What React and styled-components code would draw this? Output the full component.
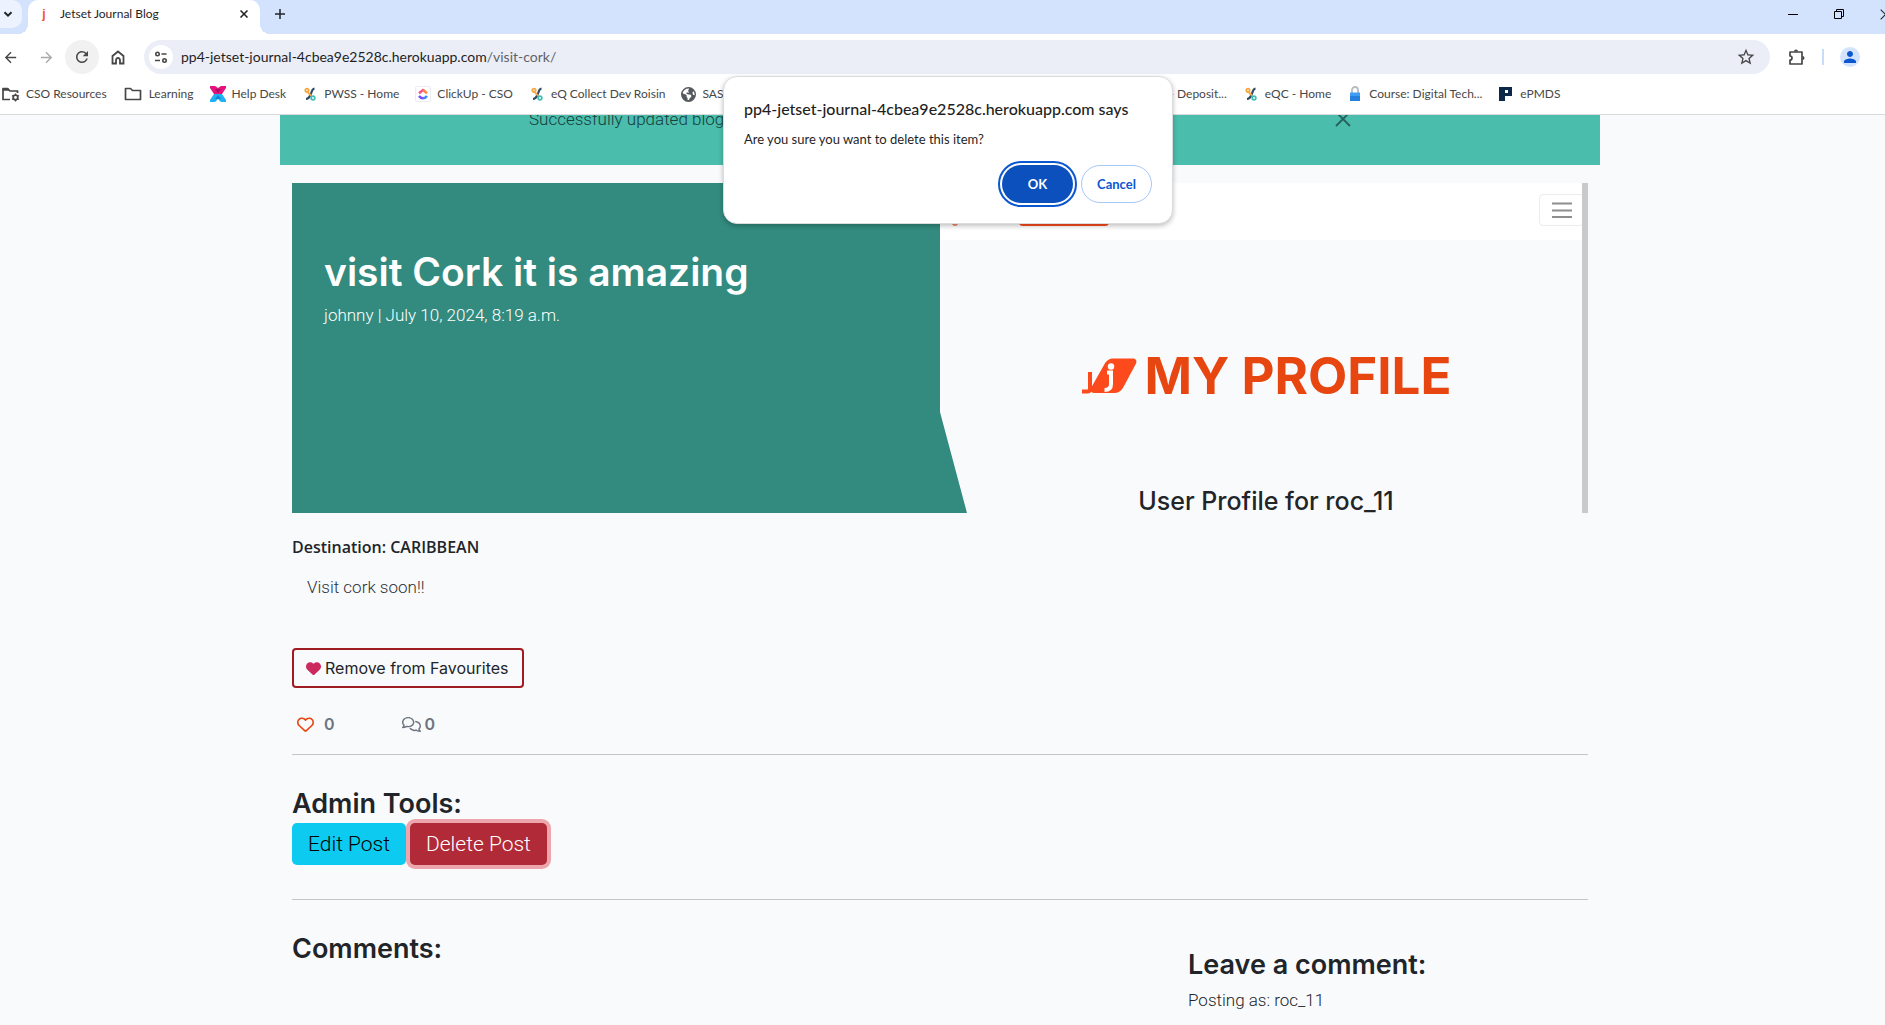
import React from 'react';
import styled, { createGlobalStyle } from 'styled-components';
import { MdArrowBack, MdArrowForward, MdRefresh, MdStarBorder, MdPerson, MdMoreVert } from 'react-icons/md';
import { FaHeart, FaRegHeart, FaRegComments, FaEarthAmericas } from 'react-icons/fa6';

const chromeFont = 'Lato, "Open Sans", sans-serif';
const headingFont = 'Inter, Roboto, sans-serif';
const bodyFont = 'Roboto, "Liberation Sans", sans-serif';

const GlobalStyle = createGlobalStyle`
  *, *::before, *::after { box-sizing: border-box; }
  html, body { margin: 0; height: 100%; overflow: hidden; }
  #root { height: 100%; }
  body { background: #f9fafc; color: #212529; font-family: ${bodyFont}; font-size: 17px; font-weight: 300; line-height: 24px; }
  h1, h2, h3, p { margin: 0; }
  button { font: inherit; color: inherit; padding: 0; border: 0; background: none; cursor: pointer; }
  svg { display: block; flex: none; }
`;

/* ---------- browser frame ---------- */

const Browser = styled.div`
  display: flex;
  flex-direction: column;
  height: 100%;
  overflow: hidden;
`;

const TabStrip = styled.div`
  display: flex;
  align-items: flex-start;
  height: 34px;
  background: #d3e3fd;
  font-family: ${chromeFont};
  overflow: hidden;
`;

const TabSearch = styled.button`
  display: flex;
  align-items: center;
  justify-content: center;
  width: 22px;
  height: 28px;
  padding-right: 6px;
  margin-right: 6px;
  border-radius: 0 10px 10px 0;
  background: #ecf2fe;
`;

const Tab = styled.div`
  position: relative;
  display: flex;
  align-items: center;
  width: 232px;
  height: 34px;
  padding: 0 12px 6px 10px;
  border-radius: 10px 10px 0 0;
  background: #fff;
  font-size: 12px;
  line-height: 16px;
  font-weight: 400;
  color: #1f1f1f;

  &::before, &::after {
    content: '';
    position: absolute;
    bottom: 0;
    width: 10px;
    height: 10px;
  }
  &::before { left: -10px; background: radial-gradient(circle at 0 0, transparent 10px, #fff 10px); }
  &::after { right: -10px; background: radial-gradient(circle at 100% 0, transparent 10px, #fff 10px); }
`;

const Favicon = styled.span`
  width: 12px;
  margin-right: 10px;
  text-align: center;
  font-family: "Liberation Sans", sans-serif;
  font-weight: 700;
  color: #f4511e;
`;

const TabTitle = styled.span`
  flex: 1;
  white-space: nowrap;
`;

const NewTab = styled.button`
  display: flex;
  align-items: center;
  justify-content: center;
  width: 28px;
  height: 28px;
  margin-left: 6px;
`;

const WindowButtons = styled.div`
  display: flex;
  height: 28px;
  margin-left: auto;
  margin-right: -23px;
`;

const WindowButton = styled.button`
  display: flex;
  align-items: center;
  justify-content: center;
  width: 46px;
`;

const Toolbar = styled.div`
  display: flex;
  align-items: center;
  gap: 2px;
  height: 46px;
  margin: 0 -19px 0 -7px;
  background: #fff;
  color: #474747;
`;

const ToolButton = styled.button`
  display: flex;
  align-items: center;
  justify-content: center;
  width: 34px;
  height: 34px;
  border-radius: 50%;
  background: ${(p) => (p.$active ? '#f1f1f1' : 'transparent')};
  color: ${(p) => (p.$muted ? '#a9a9a9' : '#474747')};
`;

const Omnibox = styled.div`
  display: flex;
  align-items: center;
  flex: 1;
  height: 34px;
  margin: 0 8px 0 7px;
  padding: 0 14px 0 5px;
  border-radius: 17px;
  background: #ebeef7;
`;

const SiteInfo = styled.button`
  display: flex;
  align-items: center;
  justify-content: center;
  width: 24px;
  height: 24px;
  margin-right: 8px;
  border-radius: 50%;
  background: #fff;
`;

const Url = styled.div`
  flex: 1;
  font-family: ${chromeFont};
  font-size: 14px;
  font-weight: 400;
  color: #5f6368;
  b { font-weight: 400; color: #1f1f1f; }
`;

const Divider = styled.span`
  width: 2px;
  height: 16px;
  margin: 0 14px 0 6px;
  background: #c8dcfb;
`;

const Avatar = styled.button`
  display: flex;
  align-items: center;
  justify-content: center;
  width: 20px;
  height: 20px;
  margin-right: 8px;
  border-radius: 50%;
  background: #d3e3fd;
  color: #0b57d0;
`;

const Bookmarks = styled.nav`
  display: flex;
  align-items: center;
  gap: 16px;
  height: 35px;
  padding-bottom: 6px;
  border-bottom: 1px solid #dadcdc;
  background: #fff;
  font-family: ${chromeFont};
  font-size: 12px;
  line-height: 16px;
  font-weight: 400;
`;

const Bookmark = styled.a`
  display: flex;
  align-items: center;
  gap: 6px;
  width: ${(p) => p.$width || 'auto'};
  color: #474747;
  text-decoration: none;
  white-space: nowrap;
`;

/* ---------- confirm dialog ---------- */

const Dialog = styled.div`
  position: absolute;
  z-index: 5;
  top: 76px;
  left: 723px;
  width: 450px;
  padding: 20px;
  border: 1px solid #d9dbdd;
  border-radius: 14px;
  background: #fff;
  box-shadow: 0 2px 5px rgba(0, 0, 0, 0.25);
  font-family: ${chromeFont};
  font-weight: 400;
  color: #1f1f1f;
`;

const DialogTitle = styled.h2`
  font-size: 16px;
  line-height: 24px;
  font-weight: 500;
`;

const DialogText = styled.p`
  margin-top: 8px;
  font-size: 13px;
  line-height: 20px;
`;

const DialogActions = styled.div`
  display: flex;
  justify-content: flex-end;
  gap: 8px;
  margin-top: 16px;
`;

const DialogButton = styled.button`
  width: 71px;
  height: 38px;
  border-radius: 19px;
  font-size: 13px;
  font-weight: 700;
  background: ${(p) => (p.$primary ? '#0b50bd' : '#fff')};
  color: ${(p) => (p.$primary ? '#fff' : '#0b57d0')};
  border: ${(p) => (p.$primary ? '0' : '1px solid #a8c7fa')};
  outline: ${(p) => (p.$primary ? '2px solid #0b57d0' : '0')};
  outline-offset: 2px;
`;

/* ---------- blog page ---------- */

const Page = styled.main`
  flex: 1;
  min-height: 0;
  overflow: hidden;
  padding-right: 5px;
`;

const Container = styled.div`
  max-width: 1320px;
  margin: 0 auto;
`;

const Alert = styled.div`
  display: flex;
  align-items: center;
  justify-content: center;
  height: 92px;
  margin-top: -42px;
  background: #4abdac;
`;

const AlertBody = styled.div`
  display: flex;
  align-items: center;
  justify-content: space-between;
  width: 822px;
  color: #17403b;
`;

const AlertClose = styled.button`
  color: #256158;
`;

const Content = styled.div`
  padding: 18px 12px 0;
`;

const Hero = styled.header`
  display: flex;
  height: 330px;
`;

const HeroText = styled.div`
  position: relative;
  z-index: 1;
  width: calc(50% + 27px);
  margin-right: -27px;
  padding: 65px 32px 0;
  background: #328b7e;
  color: #fff;
  clip-path: polygon(0 0, calc(100% - 27px) 0, calc(100% - 27px) 229px, 100% 100%, 0 100%);
`;

const HeroTitle = styled.h1`
  font-family: ${headingFont};
  font-size: 39px;
  line-height: 48px;
  font-weight: 600;
`;

const Byline = styled.p`
  margin-top: 7px;
`;

const HeroImage = styled.div`
  display: flex;
  flex-direction: column;
  width: 50%;
  border-right: 6px solid #c9c9c9;
  background: #f9fafc;
  overflow: hidden;
`;

const ShotNav = styled.div`
  display: flex;
  flex: none;
  align-items: flex-start;
  height: 57px;
  padding: 11px 0 0 12px;
  background: #fff;
`;

const ShotDot = styled.span`
  width: 6px;
  height: 32px;
  border-radius: 3px;
  background: #f08a6c;
`;

const ShotPill = styled.span`
  width: 90px;
  height: 32px;
  margin-left: 61px;
  border-radius: 4px;
  background: #fd4a1c;
`;

const ShotToggle = styled.button`
  display: flex;
  align-items: center;
  justify-content: center;
  width: 45px;
  height: 32px;
  margin: 0 -2px 0 auto;
  border: 1px solid #ececec;
  border-radius: 4px;
  color: #8e8e8e;
`;

const ShotBody = styled.div`
  padding: 106px 0 0 10px;
  font-family: ${headingFont};
`;

const ShotHeading = styled.div`
  display: flex;
  align-items: center;
  justify-content: center;
  gap: 8px;
  color: #e84610;
  font-size: 51px;
  line-height: 60px;
  font-weight: 700;
`;

const ShotSubheading = styled.div`
  margin-top: 80px;
  text-align: center;
  font-size: 25px;
  line-height: 30px;
  font-weight: 500;
`;

const Destination = styled.p`
  margin-top: 22px;
  font-family: "Open Sans", "Noto Sans", sans-serif;
  font-size: 16px;
  font-weight: 600;
`;

const PostBody = styled.p`
  margin-top: 16px;
  padding-left: 15px;
  color: #2c3138;
`;

const FavouriteButton = styled.button`
  display: flex;
  align-items: center;
  gap: 4px;
  height: 40px;
  margin-top: 49px;
  padding: 0 13px 0 12px;
  border: 2px solid #9f1c22;
  border-radius: 4px;
  font-family: ${headingFont};
  font-size: 16px;
  font-weight: 400;
  svg { color: #cb2a5e; }
`;

const Counts = styled.div`
  display: flex;
  margin-top: 24px;
  padding-left: 5px;
  font-family: ${headingFont};
  font-size: 16px;
  font-weight: 600;
  color: #6c757d;
`;

const Count = styled.button`
  display: flex;
  align-items: center;
  gap: ${(p) => p.$gap};
  margin-right: 67px;
  svg { color: ${(p) => p.$iconColor || 'inherit'}; }
`;

const Rule = styled.hr`
  height: 1px;
  margin: ${(p) => p.$top} 0 33px;
  border: 0;
  background: #c3c5c7;
`;

const SectionTitle = styled.h2`
  font-family: ${headingFont};
  font-size: 27px;
  line-height: 32px;
  font-weight: 600;
`;

const Actions = styled.div`
  display: flex;
  gap: 4px;
  margin-top: 3px;
`;

const ActionButton = styled.button`
  height: 42px;
  padding: 0 16px;
  border-radius: 5px;
  font-size: 21px;
  background: ${(p) => (p.$danger ? '#b02a37' : '#0dcaf0')};
  color: ${(p) => (p.$danger ? '#fff' : '#000')};
  box-shadow: ${(p) => (p.$danger ? '0 0 0 4px #eea6ad' : 'none')};
`;

const Columns = styled.div`
  display: grid;
  grid-template-columns: 1fr 400px;
`;

const CommentForm = styled.section`
  padding-top: 16px;
`;

const PostingAs = styled.p`
  margin-top: 7px;
`;

/* ---------- drawings ---------- */

const stroke = { fill: 'none', stroke: 'currentColor', strokeWidth: 2 };

const ChevronIcon = () => (
  <svg width="10" height="10" viewBox="0 0 10 10" {...stroke}><path d="M1.5 3.2 5 6.7 8.5 3.2" /></svg>
);
const CrossIcon = ({ size, width }) => (
  <svg width={size} height={size} viewBox="0 0 16 16" {...stroke} strokeWidth={width}><path d="M1 1 15 15M15 1 1 15" /></svg>
);
const PlusIcon = () => (
  <svg width="10" height="10" viewBox="0 0 10 10" {...stroke} strokeWidth="1.5"><path d="M5 0v10M0 5h10" /></svg>
);
const MinimiseIcon = () => (
  <svg width="10" height="10" viewBox="0 0 10 10"><path d="M0 5h10v1H0z" /></svg>
);
const RestoreIcon = () => (
  <svg width="10" height="10" viewBox="0 0 10 10" fill="none" stroke="#000"><path d="M.5 2.5h7v7h-7zM2.500 2.500v-2h7v7h-2" /></svg>
);
const HomeIcon = () => (
  <svg width="14" height="15" viewBox="0 0 14 15" {...stroke} strokeWidth="1.8">
    <path d="M1.500 6 7 1.500 12.500 6v7.500H9V10a2 2 0 0 0-4 0v3.500H1.500z" />
  </svg>
);
const TuneIcon = () => (
  <svg width="14" height="14" viewBox="0 0 14 14" {...stroke} strokeWidth="1.600">
    <circle cx="3.500" cy="4" r="1.700" /><path d="M7.500 4H12.500M1 10.500h5" /><circle cx="10.500" cy="10.500" r="1.700" />
  </svg>
);
const ExtensionIcon = () => (
  <svg width="18" height="18" viewBox="0 0 18 18">
    <path d="M2 4h12v12H2v-4a2 2 0 0 0 0-4z" {...stroke} strokeWidth="1.700" strokeLinejoin="round" />
    <path d="M6 3.500a2 2 0 0 1 4 0zM14.500 8a2 2 0 0 1 0 4z" fill="currentColor" />
  </svg>
);
const FolderIcon = ({ gear }) => (
  <svg width="20" height="16" viewBox="0 0 20 16" {...stroke} strokeWidth="1.700">
    {gear
      ? <><path d="M10 13.500H3V3h5l2 2h7.500v2" /><path d="M2.500 1.800H8l2 3H2.500z" fill="currentColor" stroke="none" />
          <circle cx="15.500" cy="11.500" r="2.300" /><path d="M15.500 7.500v8M12 9.500l7 4M12 13.500l7-4" strokeWidth="1.200" strokeDasharray="1.600 4.900" /></>
      : <path d="M2.500 2.500h5l2 2h8v9h-15z" strokeLinejoin="round" />}
  </svg>
);
const HelpDeskIcon = () => (
  <svg width="16" height="16" viewBox="0 0 16 16">
    <path d="M0 0h5l3 2 3-2h5v2l-4 6H4L0 2z" fill="#e5127d" /><path d="M4 8h8l4 6v2h-5l-3-3-3 3H0v-2z" fill="#1fb1f3" />
    <path d="M5 3h6L8 7z" fill="#a80f63" /><path d="M5 13h6L8 9z" fill="#1683cf" />
  </svg>
);
const PercentIcon = () => (
  <svg width="16" height="16" viewBox="0 0 16 16" fill="none" strokeWidth="1.800">
    <path d="M12.500 2.500C9.500 3 9.500 7 8.500 9s-2.500 4-4.500 4" stroke="#2f4a68" strokeWidth="2.200" />
    <circle cx="5" cy="4.300" r="1.700" stroke="#f6a63c" /><path d="M6 6.500 9 9.500" stroke="#f6a63c" /><circle cx="11" cy="12" r="1.800" stroke="#45bfb5" />
  </svg>
);
const ClickUpIcon = () => (
  <svg width="16" height="16" viewBox="0 0 16 16" fill="none" strokeWidth="2.400">
    <rect x=".5" y=".5" width="15" height="15" rx="1.500" stroke="#ececf4" strokeWidth="1" />
    <path d="M4 7.300 8 4l2 1.600" stroke="#fb4b8a" /><path d="m8 4 4 3.300" stroke="#fd8a3c" />
    <path d="M4 10c1 1.500 2.500 2.200 4 2.200" stroke="#7a4bfb" /><path d="M8 12.200c1.500 0 3-.7 4-2.200" stroke="#3f8dfb" />
  </svg>
);
const LockIcon = () => (
  <svg width="16" height="16" viewBox="0 0 16 16">
    <path d="M5 8V4a3 3 0 0 1 6 0v4" fill="none" stroke="#b9bcc0" strokeWidth="1.800" />
    <path d="M3 6.500h10V15H3z" fill="#3f9df3" /><path d="M3 10h10v5H3z" fill="#2581dd" />
  </svg>
);
const PIcon = () => (
  <svg width="16" height="16" viewBox="0 0 16 16">
    <path d="M1 1h13v9H7v5H1zM7 4v3h3V4z" fill="#0d2748" fillRule="evenodd" />
  </svg>
);
const MenuLines = () => (
  <svg width="20" height="17" viewBox="0 0 20 17" {...stroke}><path d="M0 1.500h20M0 8.500h20M0 15h20" /></svg>
);
const JetsetLogo = () => (
  <svg width="56" height="38" viewBox="0 0 56 38">
    <path d="M1 34.500h5.500q2.500 0 2.500-3V15" fill="none" stroke="#fd4a1c" strokeWidth="4" />
    <path d="M32 1.500h20c3 0 4 2.500 3 5L43 29c-2 4-5 7-9 7H13c-3 0-4-3-3-5L23 8c2-4 5-6.500 9-6.500z" fill="#fd4a1c" />
    <circle cx="30" cy="9.500" r="3.200" fill="#fff" />
    <path d="M26 15.500h4V27c0 4-2 6-6.500 6" fill="none" stroke="#fff" strokeWidth="4" />
  </svg>
);

const bookmarks = [
  { label: 'CSO Resources', icon: <FolderIcon gear /> },
  { label: 'Learning', icon: <FolderIcon /> },
  { label: 'Help Desk', icon: <HelpDeskIcon /> },
  { label: 'PWSS - Home', icon: <PercentIcon /> },
  { label: 'ClickUp - CSO', icon: <ClickUpIcon /> },
  { label: 'eQ Collect Dev Roisin', icon: <PercentIcon /> },
  { label: 'SAS', icon: <FaEarthAmericas size={15} color="#55585c" />, width: '472px' },
  { label: '- Deposit...' },
  { label: 'eQC - Home', icon: <PercentIcon /> },
  { label: 'Course: Digital Tech...', icon: <LockIcon /> },
  { label: 'ePMDS', icon: <PIcon /> },
];

export default function App() {
  return (
    <Browser>
      <GlobalStyle />
      <TabStrip>
        <TabSearch aria-label="Search tabs"><ChevronIcon /></TabSearch>
        <Tab>
          <Favicon>j</Favicon>
          <TabTitle>Jetset Journal Blog</TabTitle>
          <button aria-label="Close tab"><CrossIcon size={8} width={3} /></button>
        </Tab>
        <NewTab aria-label="New tab"><PlusIcon /></NewTab>
        <WindowButtons>
          <WindowButton aria-label="Minimise"><MinimiseIcon /></WindowButton>
          <WindowButton aria-label="Restore"><RestoreIcon /></WindowButton>
          <WindowButton aria-label="Close"><CrossIcon size={11} width={1.5} /></WindowButton>
        </WindowButtons>
      </TabStrip>
      <Toolbar>
        <ToolButton aria-label="Back"><MdArrowBack size={17} /></ToolButton>
        <ToolButton aria-label="Forward" $muted><MdArrowForward size={17} /></ToolButton>
        <ToolButton aria-label="Reload" $active><MdRefresh size={18} /></ToolButton>
        <ToolButton aria-label="Home"><HomeIcon /></ToolButton>
        <Omnibox>
          <SiteInfo aria-label="Site information"><TuneIcon /></SiteInfo>
          <Url><b>pp4-jetset-journal-4cbea9e2528c.herokuapp.com</b>/visit-cork/</Url>
          <button aria-label="Bookmark this page"><MdStarBorder size={20} /></button>
        </Omnibox>
        <ToolButton aria-label="Extensions"><ExtensionIcon /></ToolButton>
        <Divider />
        <Avatar aria-label="Profile"><MdPerson size={18} /></Avatar>
        <ToolButton aria-label="Menu"><MdMoreVert size={18} /></ToolButton>
      </Toolbar>
      <Bookmarks>
        {bookmarks.map((b) => (
          <Bookmark key={b.label} href="#" $width={b.width}>{b.icon}{b.label}</Bookmark>
        ))}
      </Bookmarks>

      <Page>
        <Container>
          <Alert role="alert">
            <AlertBody>
              Successfully updated blog
              <AlertClose aria-label="Close"><CrossIcon size={16} width={1.8} /></AlertClose>
            </AlertBody>
          </Alert>
          <Content>
            <Hero>
              <HeroText>
                <HeroTitle>visit Cork it is amazing</HeroTitle>
                <Byline>johnny | July 10, 2024, 8:19 a.m.</Byline>
              </HeroText>
              <HeroImage>
                <ShotNav>
                  <ShotDot />
                  <ShotPill />
                  <ShotToggle aria-label="Toggle navigation"><MenuLines /></ShotToggle>
                </ShotNav>
                <ShotBody>
                  <ShotHeading><JetsetLogo />MY PROFILE</ShotHeading>
                  <ShotSubheading>User Profile for roc_11</ShotSubheading>
                </ShotBody>
              </HeroImage>
            </Hero>
            <Destination>Destination: CARIBBEAN</Destination>
            <PostBody>Visit cork soon!!</PostBody>
            <FavouriteButton><FaHeart size={15} />Remove from Favourites</FavouriteButton>
            <Counts>
              <Count $gap="10px" $iconColor="#e84610" aria-label="Likes"><FaRegHeart size={17} />0</Count>
              <Count $gap="4px" aria-label="Comments"><FaRegComments size={19} />0</Count>
            </Counts>
            <Rule $top="18px" />
            <SectionTitle>Admin Tools:</SectionTitle>
            <Actions>
              <ActionButton>Edit Post</ActionButton>
              <ActionButton $danger>Delete Post</ActionButton>
            </Actions>
            <Rule $top="34px" />
            <Columns>
              <SectionTitle>Comments:</SectionTitle>
              <CommentForm>
                <SectionTitle>Leave a comment:</SectionTitle>
                <PostingAs>Posting as: roc_11</PostingAs>
              </CommentForm>
            </Columns>
          </Content>
        </Container>
      </Page>

      <Dialog role="dialog" aria-labelledby="confirm-title">
        <DialogTitle id="confirm-title">pp4-jetset-journal-4cbea9e2528c.herokuapp.com says</DialogTitle>
        <DialogText>Are you sure you want to delete this item?</DialogText>
        <DialogActions>
          <DialogButton $primary>OK</DialogButton>
          <DialogButton>Cancel</DialogButton>
        </DialogActions>
      </Dialog>
    </Browser>
  );
}
